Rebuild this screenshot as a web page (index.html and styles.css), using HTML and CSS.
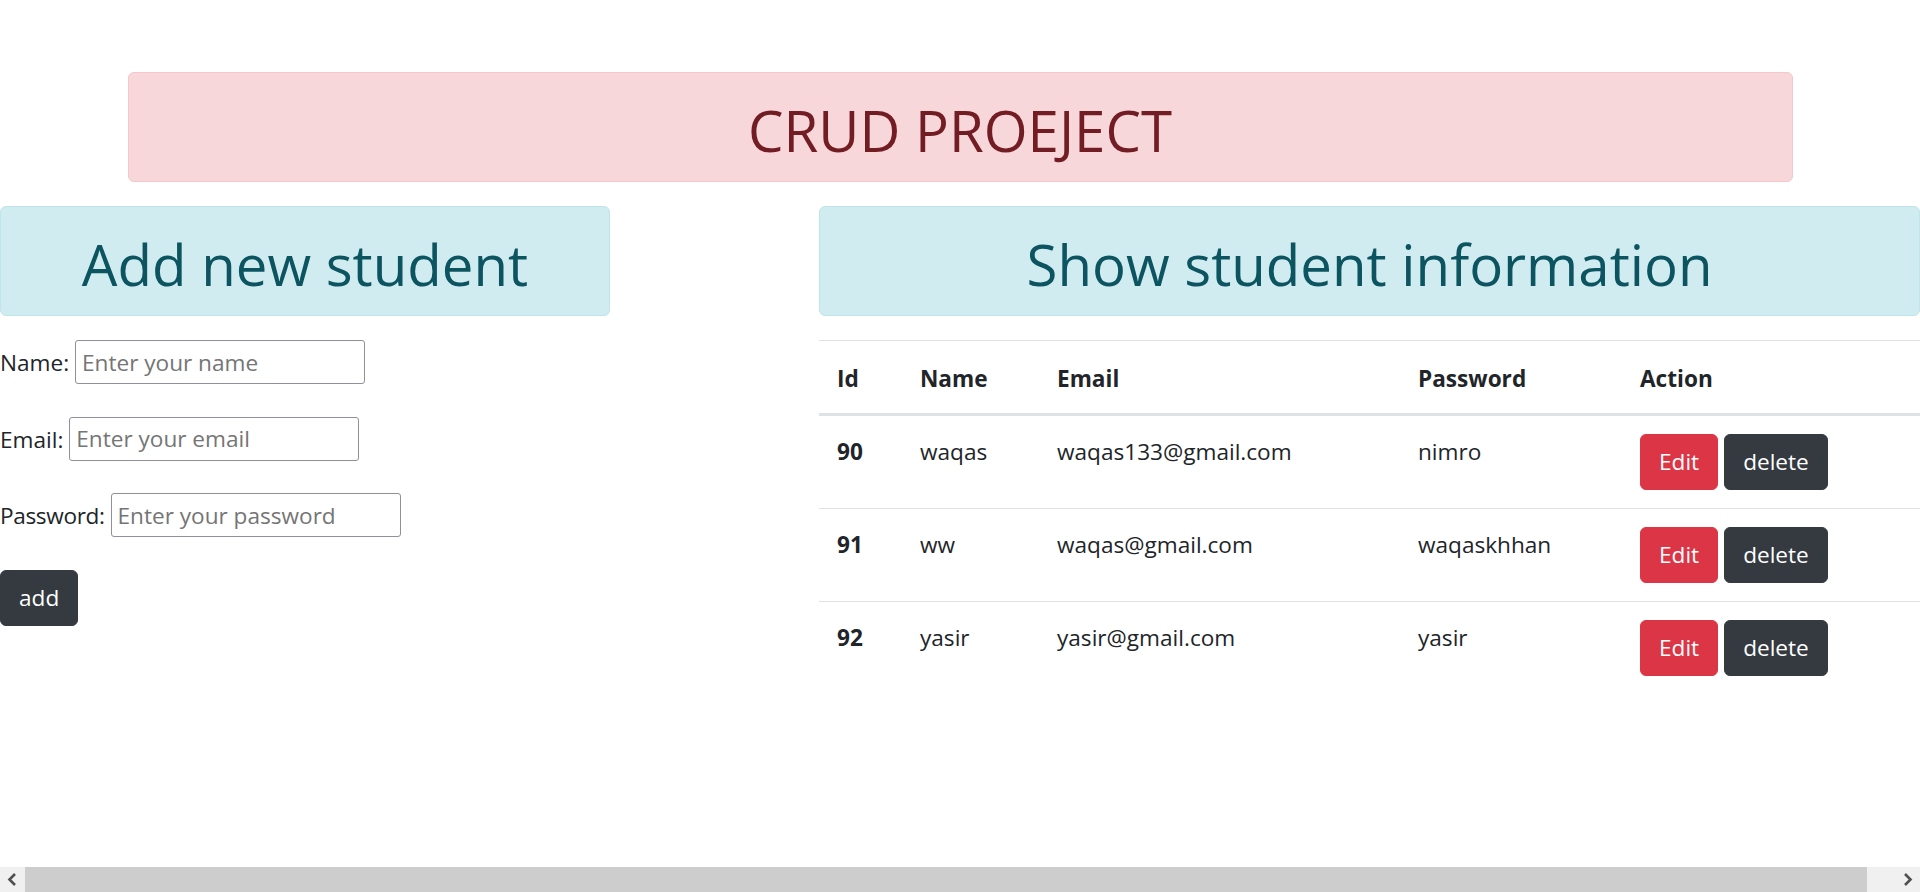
FILE: index.html
```html
<!DOCTYPE html>
<html lang="en">
<head>
<meta charset="utf-8">
<title>CRUD PROEJECT</title>
<link rel="stylesheet" href="styles.css">
</head>
<body>
<div class="page">
  <div class="container">
    <div class="alert alert-danger"><h1>CRUD PROEJECT</h1></div>
  </div>
  <div class="main">
    <div class="col-left">
      <div class="alert alert-info"><h1>Add new student</h1></div>
      <form class="form">
        <div class="field"><label>Name:</label> <input type="text" placeholder="Enter your name"></div>
        <div class="field"><label>Email:</label> <input type="text" placeholder="Enter your email"></div>
        <div class="field"><label class="tight">Password:</label> <input type="password" placeholder="Enter your password"></div>
        <div class="field"><button type="button" class="btn btn-dark">add</button></div>
      </form>
    </div>
    <div class="col-right">
      <div class="alert alert-info"><h1>Show student information</h1></div>
      <table class="table">
        <colgroup>
          <col class="c-id"><col class="c-name"><col class="c-email"><col class="c-pass"><col class="c-action">
        </colgroup>
        <thead>
          <tr><th>Id</th><th>Name</th><th>Email</th><th>Password</th><th>Action</th></tr>
        </thead>
        <tbody>
          <tr><th>90</th><td>waqas</td><td>waqas133@gmail.com</td><td>nimro</td>
            <td><div class="actions"><button type="button" class="btn btn-danger">Edit</button><button type="button" class="btn btn-dark">delete</button></div></td></tr>
          <tr><th>91</th><td>ww</td><td>waqas@gmail.com</td><td>waqaskhhan</td>
            <td><div class="actions"><button type="button" class="btn btn-danger">Edit</button><button type="button" class="btn btn-dark">delete</button></div></td></tr>
          <tr><th>92</th><td>yasir</td><td>yasir@gmail.com</td><td>yasir</td>
            <td><div class="actions"><button type="button" class="btn btn-danger">Edit</button><button type="button" class="btn btn-dark">delete</button></div></td></tr>
        </tbody>
      </table>
    </div>
  </div>
</div>
<div class="hscroll">
  <div class="hs-arrow">
    <svg width="25" height="25" viewBox="0 0 25 25"><polyline points="15,7 9.5,12.5 15,18" fill="none" stroke="#505050" stroke-width="2.6"/></svg>
  </div>
  <div class="hs-track"><div class="hs-thumb"></div></div>
  <div class="hs-arrow">
    <svg width="25" height="25" viewBox="0 0 25 25"><polyline points="10,7 15.5,12.5 10,18" fill="none" stroke="#505050" stroke-width="2.6"/></svg>
  </div>
</div>
</body>
</html>
```

FILE: styles.css
```css
* { box-sizing: border-box; }

html, body {
  margin: 0;
  padding: 0;
  overflow: hidden;
}

body {
  font-family: "Open Sans", "Noto Sans", sans-serif;
  font-size: 22.6px;
  line-height: 36px;
  color: #212529;
  background: #fff;
}

.page {
  padding-top: 72px;
}

.container {
  width: 1665px;
  margin: 0 auto;
}

.alert {
  padding: 22px 30px 14px;
  border: 1px solid transparent;
  border-radius: 6px;
  margin-bottom: 24px;
  text-align: center;
}

.alert h1 {
  margin: 0;
  font-size: 56.4px;
  line-height: 72px;
  font-weight: 400;
}

.alert-danger {
  background: #f8d7da;
  border-color: #f5c6cb;
  color: #721c24;
}

.alert-info {
  background: #d1ecf1;
  border-color: #bee5eb;
  color: #0c5460;
}

.main {
  display: flex;
  width: 1920px;
}

.col-left {
  width: 610px;
  flex: none;
}

.col-right {
  width: 1101px;
  margin-left: 209px;
  flex: none;
}

.form {
  display: flex;
  flex-direction: column;
  gap: 32.5px;
  margin: 0;
}

.field {
  height: 44px;
  white-space: nowrap;
}

.field label.tight {
  letter-spacing: -0.35px;
}

.field input {
  width: 290px;
  height: 44px;
  padding: 0 6px;
  border: 1px solid #8f8f9d;
  border-radius: 3px;
  font-family: inherit;
  font-size: 22.6px;
  color: #212529;
  background: #fff;
  vertical-align: baseline;
}

.field input::placeholder {
  color: #757575;
}

.btn {
  display: inline-block;
  padding: 9px 18px;
  border: 1px solid transparent;
  border-radius: 6px;
  font-family: inherit;
  font-size: 22.6px;
  line-height: 36px;
  font-weight: 400;
  color: #fff;
  cursor: pointer;
}

.btn-dark {
  background: #343a40;
  border-color: #343a40;
}

.btn-danger {
  background: #dc3545;
  border-color: #dc3545;
}

.table {
  width: 1101px;
  border-collapse: collapse;
  table-layout: fixed;
}

.c-id { width: 83px; }
.c-name { width: 137px; }
.c-email { width: 361px; }
.c-pass { width: 222px; }
.c-action { width: 298px; }

.table th,
.table td {
  padding: 18px;
  border-top: 1px solid #dee2e6;
  text-align: left;
  vertical-align: top;
  white-space: nowrap;
}

.table th {
  font-weight: 700;
}

.table thead th {
  vertical-align: bottom;
  padding: 20px 18px 16px;
  border-bottom: 3px solid #dee2e6;
}

.actions {
  display: flex;
  gap: 6px;
}

.hscroll {
  position: fixed;
  left: 0;
  right: 0;
  bottom: 0;
  height: 25px;
  display: flex;
  background: #f0f0f0;
}

.hs-arrow {
  width: 25px;
  height: 25px;
  flex: none;
}

.hs-arrow svg {
  display: block;
}

.hs-track {
  flex: 1;
  padding-right: 28px;
}

.hs-thumb {
  height: 25px;
  background: #cdcdcd;
}
```
